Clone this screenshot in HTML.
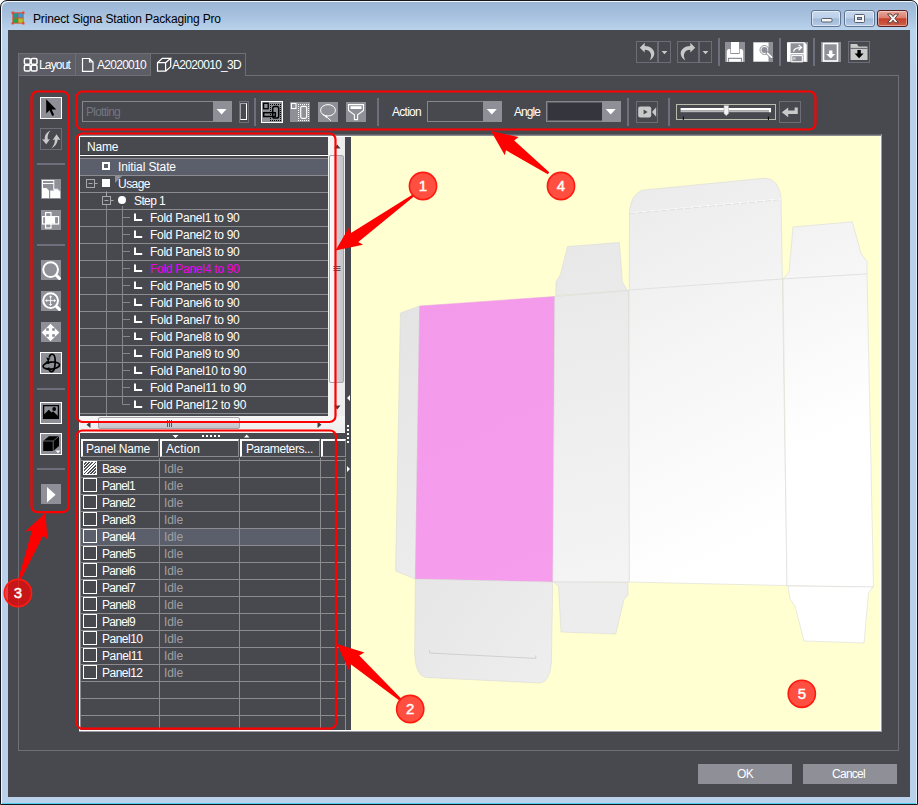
<!DOCTYPE html>
<html>
<head>
<meta charset="utf-8">
<title>Prinect Signa Station Packaging Pro</title>
<style>
html,body{margin:0;padding:0;background:#fff;}
body{width:918px;height:805px;position:relative;overflow:hidden;font-family:"Liberation Sans",sans-serif;font-size:12px;color:#ffffff;}
.a{position:absolute;box-sizing:border-box;}
#win{left:0;top:0;width:918px;height:805px;border-radius:7px 7px 0 0;background:linear-gradient(#9bb5d5 0px,#a6c0de 14px,#bad4ed 30px,#b9d1ea 70px,#b9d1ea 100%);border:1px solid #15171c;box-shadow:inset 1px 1px 0 0 #f0f6fc, inset -1px 0 0 0 #d8f0fa, inset 0 -1px 0 0 #4fd2f2;}
#client{left:8px;top:30px;width:902px;height:767px;background:#48494f;}
.t{position:absolute;white-space:nowrap;line-height:14px;}
.sep{position:absolute;background:#6e6f7c;}
.gb{position:absolute;box-sizing:border-box;background:#8e8f97;}
.wb{border:1px solid #fff;}
.tb{position:absolute;box-sizing:border-box;border:1px solid #6c6d76;}
.hl{position:absolute;height:1px;background:#8b8b90;}
.vl{position:absolute;width:1px;background:#8b8b90;}
.row{position:absolute;left:0;height:17px;}
.hdr{position:absolute;box-sizing:border-box;border:1px solid;border-color:#fdfdfd #85858a #85858a #fdfdfd;box-shadow:inset 1px 1px 0 #d0d0d0;}
.cb{position:absolute;box-sizing:border-box;width:14px;height:14px;border:1px solid #fff;}
.idle{color:#a0a0a0;}
</style>
</head>
<body>
<div id="win" class="a"></div>
<!-- title bar -->
<svg class="a" style="left:10.500px;top:10.500px" width="14" height="14" viewBox="0 0 15 15">
 <rect x="1.500" y="1.500" width="12" height="12" fill="#e2462c"/>
 <rect x="2.500" y="2.500" width="4.600" height="4.600" fill="#1e9a92"/><rect x="8" y="2.500" width="4.600" height="4.600" fill="#2a9fdc"/>
 <rect x="2.500" y="8" width="4.600" height="4.600" fill="#22a548"/><rect x="8" y="8" width="4.600" height="4.600" fill="#a6c92a"/>
 <g fill="#e2462c"><rect x="0.600" y="0.600" width="2.400" height="2.400"/><rect x="12" y="0.600" width="2.400" height="2.400"/><rect x="0.600" y="12" width="2.400" height="2.400"/><rect x="12" y="12" width="2.400" height="2.400"/></g>
</svg>
<div class="t" id="title" style="left:33px;top:12px;color:#000;font-size:12px;letter-spacing:-0.16px;">Prinect Signa Station Packaging Pro</div>
<!-- window buttons -->
<div class="a" style="left:811px;top:10px;width:30px;height:17px;border:1px solid #5f7591;border-radius:3px;background:linear-gradient(#c7d9ee 0,#bccfe8 48%,#9fb9d8 52%,#b5cbe6 100%);box-shadow:inset 0 0 0 1px rgba(255,255,255,.55);"></div>
<div class="a" style="left:844px;top:10px;width:31px;height:17px;border:1px solid #5f7591;border-radius:3px;background:linear-gradient(#c7d9ee 0,#bccfe8 48%,#9fb9d8 52%,#b5cbe6 100%);box-shadow:inset 0 0 0 1px rgba(255,255,255,.55);"></div>
<div class="a" style="left:877px;top:10px;width:31px;height:17px;border:1px solid #5a1d20;border-radius:3px;background:linear-gradient(#e9a99b 0,#d97f70 45%,#c4402c 52%,#d0604a 100%);box-shadow:inset 0 0 0 1px rgba(255,255,255,.4);"></div>
<svg class="a" style="left:811px;top:10px" width="97" height="17" viewBox="0 0 97 17">
 <rect x="10.500" y="8.500" width="10.500" height="3.500" rx="1" fill="#f6f6f6" stroke="#56606e" stroke-width="1"/>
 <rect x="43.500" y="4.500" width="10" height="8" rx="1" fill="#f6f6f6" stroke="#56606e" stroke-width="1"/><rect x="46.500" y="7.500" width="4" height="2" fill="#8fa6c8" stroke="#56606e" stroke-width="1"/>
 <path d="M76.500 4 L80 4 L82 6.600 L84 4 L87.500 4 L83.900 8.400 L87.500 12.800 L84 12.800 L82 10.200 L80 12.800 L76.500 12.800 L80.100 8.400 Z" fill="#f6f6f6" stroke="#5a3a3a" stroke-width="1"/>
</svg>
<div id="client" class="a"></div>

<!-- frame -->
<div class="a" style="left:18px;top:75px;width:881px;height:676px;border:1px solid #6d6e76;"></div>
<!-- tabs -->
<div class="a" style="left:18px;top:53px;width:133px;height:23px;background:#5c5d65;border:1px solid #6d6e76;"></div>
<div class="a" style="left:75px;top:53px;width:1px;height:23px;background:#6d6e76;"></div>
<div class="a" style="left:151px;top:53px;width:95px;height:23px;background:#48494f;border:1px solid #6d6e76;border-left:none;border-bottom:none;"></div>
<svg class="a" style="left:18px;top:53px" width="226" height="23" viewBox="0 0 226 23" fill="none" stroke="#fff" stroke-width="1.2">
 <g stroke-width="1.500"><rect x="6.400" y="5.400" width="5.800" height="5.800" rx="1.300"/><rect x="13.200" y="5.400" width="5.800" height="5.800" rx="1.300"/><rect x="6.400" y="12.200" width="5.800" height="5.800" rx="1.300"/><rect x="13.200" y="12.200" width="5.800" height="5.800" rx="1.300"/></g>
 <path d="M64.500 5.500 H71.500 L75 9 V18.300 H64.500 Z M71.500 5.500 V9 H75"/>
 <path d="M139.500 9.700 H147.600 V18.200 H139.500 Z M139.500 9.700 L144.200 5.300 H152.700 L147.600 9.700 M152.700 5.300 V13.600 L147.600 18.200"/>
</svg>
<div class="t" id="tab1" style="left:39px;top:58px;letter-spacing:-0.84px;">Layout</div>
<div class="t" id="tab2" style="left:97px;top:58px;letter-spacing:-0.72px;">A2020010</div>
<div class="t" id="tab3" style="left:172px;top:58px;letter-spacing:-0.7px;">A2020010_3D</div>
<!-- top right toolbar -->
<div class="tb" style="left:636px;top:41px;width:22px;height:22px;"></div><div class="tb" style="left:658px;top:41px;width:13px;height:22px;"></div>
<div class="tb" style="left:677px;top:41px;width:22px;height:22px;"></div><div class="tb" style="left:699px;top:41px;width:13px;height:22px;"></div>
<div class="sep" style="left:717.500px;top:38px;width:2px;height:28px;"></div>
<div class="gb" style="left:725px;top:42px;width:20px;height:20px;"></div>
<div class="gb" style="left:753px;top:42px;width:20px;height:20px;"></div>
<div class="sep" style="left:779px;top:38px;width:2px;height:28px;"></div>
<div class="gb" style="left:788px;top:42px;width:20px;height:20px;"></div>
<div class="sep" style="left:813px;top:38px;width:2px;height:28px;"></div>
<div class="gb" style="left:821px;top:42px;width:20px;height:20px;"></div>
<div class="tb" style="left:848px;top:41px;width:22px;height:22px;"></div>
<svg class="a" id="tr-icons" style="left:630px;top:36px" width="250" height="32" viewBox="630 36 250 32">

 <g fill="#c9c9c9">
  <!-- undo -->
  <path d="M639.800 47.800 L644.700 42.800 V46 C650 46 654.600 49.500 654.300 54 C654 57 652 59 649.600 60.200 C651.300 57.500 651.500 55 650.500 53 C649.500 51 647.500 49.800 644.700 49.800 V52.600 Z"/>
  <path d="M661.600 51 h5.800 l-2.900 3.200 z"/>
  <!-- redo -->
  <path d="M695.200 47.800 L690.300 42.800 V46 C685 46 680.400 49.500 680.700 54 C681 57 683 59 685.400 60.200 C683.700 57.500 683.500 55 684.500 53 C685.500 51 687.500 49.800 690.300 49.800 V52.600 Z"/>
  <path d="M702.600 51 h5.800 l-2.900 3.200 z"/>
 </g>
 <!-- print -->
 <path d="M726.800 61.800 V51.500 Q726.800 49 729.300 49 H740.700 Q743.200 49 743.200 51.500 V61.800 Z" fill="#fff"/>
 <path d="M730.300 42 H739.700 V54 H730.300 Z" fill="#8e8f97"/>
 <path d="M731 42 H739 V53 H731 Z" fill="#fff"/>
 <path d="M728.500 61.800 V58.400 H741.500 V61.800" fill="none" stroke="#8e8f97" stroke-width="1.200"/>
 <!-- search -->
 <path d="M753.600 42.500 H768.500 V61.500 H753.600 Z" fill="#fff"/>
 <circle cx="764.500" cy="50" r="4.500" fill="none" stroke="#85868e" stroke-width="0.900"/>
 <circle cx="764.500" cy="50" r="3" fill="#8e8f97"/>
 <path d="M767.300 53 L771.800 57.400" stroke="#85868e" stroke-width="3.200" stroke-linecap="round"/>
 <path d="M767.600 53.300 L771.500 57.100" stroke="#fff" stroke-width="1.800" stroke-linecap="round"/>
 <!-- save -->
 <path d="M787 42.200 H804.400 L806.700 44.500 V61.800 H787 Z" fill="#fff"/>
 <rect x="790.600" y="43.300" width="12.900" height="9.700" fill="#8e8f97"/>
 <rect x="790.600" y="54.400" width="12.900" height="7.400" fill="#8e8f97"/>
 <rect x="791.800" y="55.600" width="10.500" height="6.200" fill="none" stroke="#fff" stroke-width="1.100"/>
 <rect x="793" y="57.200" width="2.600" height="2.600" fill="#c4c5ca"/>
 <path d="M793.600 51.600 C793.800 48.600 796.500 47.600 801.200 47.600 M798.600 44.900 L801.600 47.600 L798.600 50.300" fill="none" stroke="#fff" stroke-width="1.200"/>
 <!-- down -->
 <rect x="823.500" y="43.500" width="14" height="17.500" fill="none" stroke="#fff" stroke-width="1.600"/>
 <path d="M829 50.500 H832.400 V54 H835.200 L830.700 58.600 L826.200 54 H829 Z" fill="#fff"/>
 <!-- folder down -->
 <path d="M850.500 44 H857 L858.500 46.500 H867.500 V60 H850.500 Z" fill="#c9c9c9"/>
 <path d="M850.500 48.400 H867.500" stroke="#48494f" stroke-width="0.800"/>
 <path d="M857.400 50 H860.800 V53.500 H863.600 L859.100 58.200 L854.600 53.500 H857.400 Z" fill="#000"/>
</svg>

<!-- toolbar row -->
<div class="tb" style="left:82px;top:101px;width:150px;height:21px;border-color:#85868e;"></div>
<div class="gb" style="left:213px;top:101px;width:19px;height:21px;"></div>
<div class="t" id="plot" style="left:86px;top:105px;color:#74757d;letter-spacing:-0.75px;">Plotting</div>
<div class="tb" style="left:239px;top:101px;width:10px;height:22px;"></div>
<div class="a" style="left:240px;top:103px;width:7px;height:17px;border:1px solid;border-color:#a4a4ac #fff #fff #a4a4ac"></div>
<div class="sep" style="left:254px;top:98px;width:2px;height:28px;"></div>
<div class="gb wb" style="left:261px;top:101px;width:22px;height:22px;"></div>
<div class="gb" style="left:290px;top:102px;width:20px;height:20px;"></div>
<div class="gb" style="left:318px;top:102px;width:20px;height:20px;"></div>
<div class="gb" style="left:346px;top:102px;width:20px;height:20px;"></div>
<div class="sep" style="left:377px;top:98px;width:2px;height:28px;"></div>
<div class="t" id="lact" style="left:392px;top:105px;letter-spacing:-0.73px;">Action</div>
<div class="tb" style="left:427px;top:101px;width:75px;height:21px;border-color:#85868e;"></div>
<div class="gb" style="left:483px;top:101px;width:19px;height:21px;"></div>
<div class="t" id="lang" style="left:514px;top:105px;letter-spacing:-0.94px;">Angle</div>
<div class="tb" style="left:546px;top:101px;width:75px;height:21px;border-color:#85868e;background:#35353d;box-shadow:inset 0 0 0 1px #5a5b63;"></div>
<div class="gb" style="left:602px;top:101px;width:19px;height:21px;"></div>
<div class="sep" style="left:627px;top:98px;width:2px;height:28px;"></div>
<div class="tb" style="left:636px;top:101px;width:22px;height:22px;"></div>
<div class="sep" style="left:668px;top:98px;width:2px;height:28px;"></div>
<div class="a" style="left:676px;top:104px;width:100px;height:16px;border:1px solid #bcbcae;"></div>
<div class="tb" style="left:779px;top:101px;width:22px;height:22px;"></div>
<svg class="a" id="tb2-icons" style="left:76px;top:96px" width="730" height="32" viewBox="76 96 730 32">

 <!-- sel1 -->
 <rect x="263.600" y="103.300" width="4.600" height="5.400" fill="none" stroke="#000" stroke-width="1.300"/>
 <path d="M270 104h1v1h-1z M270 120h1v1h-1z M272 104h1v1h-1z M272 120h1v1h-1z M274 104h1v1h-1z M274 120h1v1h-1z M276 104h1v1h-1z M276 120h1v1h-1z M278 104h1v1h-1z M278 120h1v1h-1z M280 104h1v1h-1z M280 120h1v1h-1z M270 106h1v1h-1z M280 106h1v1h-1z M270 108h1v1h-1z M280 108h1v1h-1z M270 110h1v1h-1z M280 110h1v1h-1z M270 112h1v1h-1z M280 112h1v1h-1z M270 114h1v1h-1z M280 114h1v1h-1z M270 116h1v1h-1z M280 116h1v1h-1z M270 118h1v1h-1z M280 118h1v1h-1z" fill="#000"/>
 <rect x="272.700" y="106.600" width="6" height="11.400" rx="1.800" fill="none" stroke="#000" stroke-width="1.500"/>
 <rect x="263.700" y="112.700" width="11.600" height="3.800" fill="none" stroke="#000" stroke-width="1.500"/>
 <!-- sel2 -->
 <rect x="291.500" y="103.500" width="4.500" height="5" fill="none" stroke="#fff" stroke-width="1.100"/>
 <path d="M298 104h1v1h-1z M298 120h1v1h-1z M300 104h1v1h-1z M300 120h1v1h-1z M302 104h1v1h-1z M302 120h1v1h-1z M304 104h1v1h-1z M304 120h1v1h-1z M306 104h1v1h-1z M306 120h1v1h-1z M308 104h1v1h-1z M308 120h1v1h-1z M298 106h1v1h-1z M308 106h1v1h-1z M298 108h1v1h-1z M308 108h1v1h-1z M298 110h1v1h-1z M308 110h1v1h-1z M298 112h1v1h-1z M308 112h1v1h-1z M298 114h1v1h-1z M308 114h1v1h-1z M298 116h1v1h-1z M308 116h1v1h-1z M298 118h1v1h-1z M308 118h1v1h-1z" fill="#fff"/>
 <rect x="300.700" y="106.300" width="6" height="12" rx="1.500" fill="none" stroke="#fff" stroke-width="1.200"/>
 <!-- lasso -->
 <ellipse cx="328" cy="110.300" rx="7.400" ry="5.700" fill="none" stroke="#fff" stroke-width="1"/>
 <path d="M322.500 114.500 L326.500 116.800 L330.800 120.600" fill="none" stroke="#fff" stroke-width="1"/>
 <circle cx="326.300" cy="116.600" r="1.100" fill="#fff"/>
 <!-- funnel -->
 <path d="M348.500 104.600 H363.500 V110.400 L357.600 114.800 V119.600 H354.400 V114.800 L348.500 110.400 Z" fill="none" stroke="#fff" stroke-width="1.100"/>
 <rect x="350.500" y="106.200" width="11" height="2.800" fill="#fff"/>
 <!-- camera -->
 <rect x="638.200" y="106.400" width="13" height="11.200" rx="2" fill="#c9c9c9"/>
 <path d="M652 112 L656.200 107.200 V116.800 Z" fill="#c9c9c9"/>
 <path d="M643.600 109.400 V114.600 L647.600 112 Z" fill="#48494f"/>
 <!-- slider -->
 <rect x="680.600" y="108" width="90.400" height="2.200" fill="#fff"/>
 <rect x="680.600" y="110.200" width="90.400" height="2" fill="#b9b9b9"/>
 <rect x="769" y="108" width="2" height="4.200" fill="#fff"/>
 <path d="M724 105.500 H728.600 V113.200 L726.300 115.800 L724 113.200 Z" fill="#f4f4f4" stroke="#a8a8a8" stroke-width="0.600"/>
 <path d="M683.300 116.600 V120 M768.400 116.600 V120" stroke="#000" stroke-width="1"/>
 <!-- enter -->
 <path d="M781.800 112.300 L788.200 107.400 V110.600 H794.600 V107.400 H797.800 V114 H788.200 V117.200 Z" fill="#c9c9c9"/>
 <path d="M216.600 109 h10 l-5 5.600 z" fill="#fff"/>
 <path d="M486.800 109 h10 l-5 5.600 z" fill="#fff"/>
 <path d="M605.700 109 h10 l-5 5.600 z" fill="#fff"/>
</svg>

<!-- left toolbar -->
<div class="gb wb" style="left:40px;top:97px;width:22px;height:22px;"></div>
<div class="tb" style="left:40px;top:128px;width:22px;height:22px;"></div>
<div class="sep" style="left:37px;top:163px;width:28px;height:2px;"></div>
<div class="gb" style="left:41px;top:179px;width:20px;height:20px;"></div>
<div class="gb" style="left:41px;top:210px;width:20px;height:20px;"></div>
<div class="sep" style="left:37px;top:244px;width:28px;height:2px;"></div>
<div class="gb" style="left:41px;top:260px;width:20px;height:20px;"></div>
<div class="gb" style="left:41px;top:291px;width:20px;height:20px;"></div>
<div class="gb" style="left:41px;top:322px;width:20px;height:20px;"></div>
<div class="gb wb" style="left:40px;top:352px;width:22px;height:22px;"></div>
<div class="sep" style="left:37px;top:388px;width:28px;height:2px;"></div>
<div class="gb wb" style="left:40px;top:402px;width:22px;height:22px;"></div>
<div class="gb wb" style="left:40px;top:433px;width:22px;height:22px;"></div>
<div class="sep" style="left:37px;top:468px;width:28px;height:2px;"></div>
<div class="gb" style="left:41px;top:484px;width:20px;height:20px;"></div>
<svg class="a" id="lt-icons" style="left:36px;top:94px" width="30" height="414" viewBox="36 94 30 414">

 <!-- cursor -->
 <path d="M46.200 99.200 V113.400 L49.600 110.300 L52.200 116 L54.200 115 L51.700 109.600 H56.300 Z" fill="#000"/>
 <!-- rotate arrows -->
 <g fill="#c9c9c9">
  <path d="M50.600 130.600 C46 132.500 44.400 136 44.800 139.500 L42 139.200 L46.200 144.300 L50 139.200 L47.800 139.500 C47.300 136.500 48 133 50.600 130.600 Z"/>
  <path d="M51.200 148.500 C55.800 146.300 57.600 142.500 57.600 139.600 L60.400 140 L56.600 134.300 L52.600 139.900 L54.800 139.600 C55 142.500 54 146 51.200 148.500 Z"/>
 </g>
 <!-- pages -->
 <g fill="#fff">
  <path d="M42 180 H54.300 V190 H53.300 V184 H43 V188 H42 Z M43 181 V183 H53.300 V181 Z"/>
  <path d="M42 188 H46.500 L49 190.500 V198 H42 Z"/>
  <path d="M50.200 190.500 H54 V188.500 H57.500 L60.200 191 V198 H50.200 Z"/>
 </g>
 <path d="M54.300 188.800 H57.300 L59.600 191" fill="none" stroke="#8e8f97" stroke-width="0.600"/>
 <!-- cross layout -->
 <g fill="none" stroke="#fff" stroke-width="1.200">
  <rect x="45.600" y="212.600" width="5.400" height="15.400"/>
  <rect x="42.600" y="216.600" width="16" height="7.400"/>
  <path d="M54.500 216.600 V224"/>
 </g>
 <rect x="45.600" y="216.600" width="5.400" height="7.400" fill="#fff"/>
 <rect x="51" y="217" width="3.500" height="6.500" fill="#fff"/>
 <!-- magnifier -->
 <circle cx="50.600" cy="269.600" r="7.400" fill="none" stroke="#fff" stroke-width="2"/>
 <path d="M56.600 275.600 L59.400 278.400" stroke="#fff" stroke-width="3" stroke-linecap="round"/>
 <!-- magnifier 2 -->
 <circle cx="50.600" cy="300.600" r="7.400" fill="none" stroke="#fff" stroke-width="2"/>
 <path d="M56.600 306.600 L59.400 309.400" stroke="#fff" stroke-width="3" stroke-linecap="round"/>
 <path d="M46 300.600 H55.200 M50.600 296 V305.200" stroke="#fff" stroke-width="0.900"/>
 <path d="M45.200 300.600 l2 -1.600 v3.200 z M56 300.600 l-2 -1.600 v3.200 z M50.600 295.200 l-1.600 2 h3.200 z M50.600 306 l-1.600 -2 h3.200 z" fill="#fff"/>
 <!-- move -->
 <path d="M50.500 323.700 L59.300 332.500 L50.500 341.300 L41.700 332.500 Z" fill="#fff"/>
 <path d="M46.200 328.200 h2.600 v2.600 h-2.600 z M52.200 328.200 h2.600 v2.600 h-2.600 z M46.200 334.200 h2.600 v2.600 h-2.600 z M52.200 334.200 h2.600 v2.600 h-2.600 z" fill="#85868e"/>
 <!-- 3d rotate -->
 <g fill="none" stroke="#000" stroke-width="1.700">
  <ellipse cx="51.300" cy="365.600" rx="8.300" ry="3.500" transform="rotate(-6 51.300 365.600)"/>
  <path d="M49.200 357.600 C50 353.200 54.600 352.600 55.100 359 C55.600 366 54.200 371.600 51.600 371.600 C49.800 371.600 48.800 369.500 48.500 367.500"/>
 </g>
 <path d="M46.300 357.600 l4 0.800 l-2.400 3 z M45.200 362 l3.800 -1.600 l0.200 3.800 z" fill="#000"/>
 <!-- image -->
 <rect x="43.600" y="405.600" width="14.800" height="12.800" fill="none" stroke="#000" stroke-width="1.300"/>
 <path d="M44 418 V414.500 L48.800 409.800 L51.500 412.500 L53 411.200 L58 416 V418 Z" fill="#000"/>
 <circle cx="54.200" cy="409" r="1.900" fill="#000"/>
 <!-- cube -->
 <path d="M43.200 441 L49 436.200 H59 V446 L53.200 451 H43.200 Z" fill="#000"/>
 <path d="M43.200 441 H53.200 V451 M53.200 441 L59 436.200" fill="none" stroke="#8e8f97" stroke-width="0.700"/>
 <path d="M55.500 450.500 h5 l-2.500 2.800 z" fill="#fff"/>
 <!-- play -->
 <path d="M47 487 V502.500 L55.600 494.700 Z" fill="#fff"/>
</svg>
<!-- tree panel -->
<div class="a" style="left:79px;top:136px;width:802px;height:595px;border:1px solid #fff;border-color:#fff #fff #fff #fff;"></div>
<div class="a" style="left:328px;top:137px;width:17px;height:295px;background:linear-gradient(90deg,#f6f6f6,#efefef 50%,#ececec);"></div>
<div class="a" style="left:80px;top:416px;width:265px;height:16px;background:linear-gradient(#f6f6f6,#ededed);"></div>
<div class="a" style="left:80px;top:155px;width:248px;height:1px;background:#fff;"></div>
<div class="a" style="left:80px;top:154px;width:248px;height:1px;background:#3a3b41;"></div>
<div class="hl" style="left:80px;top:158px;width:248px;"></div>
<div class="t" id="hname" style="left:87px;top:140px;letter-spacing:-0.18px;">Name</div>
<div class="a" style="left:80px;top:159px;width:248px;height:16px;background:#5b5f6c;"></div>
<div class="hl" style="left:80px;top:175px;width:248px;"></div>
<div class="t tr" style="left:118px;top:160px;letter-spacing:-0.11px;">Initial State</div>
<div class="hl" style="left:80px;top:192px;width:248px;"></div>
<div class="t tr" style="left:118px;top:177px;letter-spacing:-0.54px;">Usage</div>
<div class="hl" style="left:80px;top:209px;width:248px;"></div>
<div class="t tr" style="left:134px;top:194px;letter-spacing:-0.62px;">Step 1</div>
<div class="hl" style="left:80px;top:226px;width:248px;"></div>
<div class="t tr" style="left:150px;top:211px;letter-spacing:-0.27px;">Fold Panel1 to 90</div>
<div class="hl" style="left:80px;top:243px;width:248px;"></div>
<div class="t tr" style="left:150px;top:228px;letter-spacing:-0.27px;">Fold Panel2 to 90</div>
<div class="hl" style="left:80px;top:260px;width:248px;"></div>
<div class="t tr" style="left:150px;top:245px;letter-spacing:-0.27px;">Fold Panel3 to 90</div>
<div class="hl" style="left:80px;top:277px;width:248px;"></div>
<div class="t tr" style="left:150px;top:262px;color:#ee00ee;letter-spacing:-0.27px;">Fold Panel4 to 90</div>
<div class="hl" style="left:80px;top:294px;width:248px;"></div>
<div class="t tr" style="left:150px;top:279px;letter-spacing:-0.27px;">Fold Panel5 to 90</div>
<div class="hl" style="left:80px;top:311px;width:248px;"></div>
<div class="t tr" style="left:150px;top:296px;letter-spacing:-0.27px;">Fold Panel6 to 90</div>
<div class="hl" style="left:80px;top:328px;width:248px;"></div>
<div class="t tr" style="left:150px;top:313px;letter-spacing:-0.27px;">Fold Panel7 to 90</div>
<div class="hl" style="left:80px;top:345px;width:248px;"></div>
<div class="t tr" style="left:150px;top:330px;letter-spacing:-0.27px;">Fold Panel8 to 90</div>
<div class="hl" style="left:80px;top:362px;width:248px;"></div>
<div class="t tr" style="left:150px;top:347px;letter-spacing:-0.27px;">Fold Panel9 to 90</div>
<div class="hl" style="left:80px;top:379px;width:248px;"></div>
<div class="t tr" style="left:150px;top:364px;letter-spacing:-0.26px;">Fold Panel10 to 90</div>
<div class="hl" style="left:80px;top:396px;width:248px;"></div>
<div class="t tr" style="left:150px;top:381px;letter-spacing:-0.21px;">Fold Panel11 to 90</div>
<div class="hl" style="left:80px;top:413px;width:248px;"></div>
<div class="t tr" style="left:150px;top:398px;letter-spacing:-0.26px;">Fold Panel12 to 90</div>
<svg class="a" style="left:80px;top:159px" width="248" height="257" viewBox="80 159 248 257"><rect x="102" y="162" width="8" height="8" fill="#fff"/><rect x="104" y="164" width="4" height="4" fill="#5b5f6c"/><rect x="102" y="179" width="8" height="8" fill="#fff"/><path d="M115 176 h7 l-7 7 z" fill="#8e8f97"/><g fill="none" stroke="#a8a8ac" stroke-width="1"><rect x="86.500" y="179.500" width="8" height="8"/><path d="M88.500 183.500 h4 M94.500 183.500 h3"/><rect x="102.500" y="196.500" width="8" height="8"/><path d="M104.500 200.500 h4 M106.500 191.500 v5 M110.500 200.500 h3"/></g><g fill="none" stroke="#85858a" stroke-width="1"><path d="M106.500 205 V416"/><path d="M122.500 206 V404.500"/><path d="M122.500 217.5 H130"/><path d="M122.500 234.5 H130"/><path d="M122.500 251.5 H130"/><path d="M122.500 268.5 H130"/><path d="M122.500 285.5 H130"/><path d="M122.500 302.5 H130"/><path d="M122.500 319.5 H130"/><path d="M122.500 336.5 H130"/><path d="M122.500 353.5 H130"/><path d="M122.500 370.5 H130"/><path d="M122.500 387.5 H130"/><path d="M122.500 404.5 H130"/></g><circle cx="122" cy="200" r="4" fill="#fff"/><path d="M135 213.5 V220 H142.200" fill="none" stroke="#fff" stroke-width="2"/><path d="M135 230.5 V237 H142.200" fill="none" stroke="#fff" stroke-width="2"/><path d="M135 247.5 V254 H142.200" fill="none" stroke="#fff" stroke-width="2"/><path d="M135 264.5 V271 H142.200" fill="none" stroke="#fff" stroke-width="2"/><path d="M135 281.5 V288 H142.200" fill="none" stroke="#fff" stroke-width="2"/><path d="M135 298.5 V305 H142.200" fill="none" stroke="#fff" stroke-width="2"/><path d="M135 315.5 V322 H142.200" fill="none" stroke="#fff" stroke-width="2"/><path d="M135 332.5 V339 H142.200" fill="none" stroke="#fff" stroke-width="2"/><path d="M135 349.5 V356 H142.200" fill="none" stroke="#fff" stroke-width="2"/><path d="M135 366.5 V373 H142.200" fill="none" stroke="#fff" stroke-width="2"/><path d="M135 383.5 V390 H142.200" fill="none" stroke="#fff" stroke-width="2"/><path d="M135 400.5 V407 H142.200" fill="none" stroke="#fff" stroke-width="2"/></svg>

<div class="a" style="left:79px;top:731px;width:803px;height:1px;background:#9c9ca2;"></div>
<div class="a" style="left:881px;top:134px;width:1px;height:598px;background:#9c9ca2;"></div>
<!-- scrollbars detail -->
<div class="a" style="left:79px;top:134px;width:802px;height:1px;background:#62636a;"></div>
<div class="a" style="left:79px;top:135px;width:802px;height:1px;background:#8a8a8e;"></div>
<div class="a" style="left:329px;top:155px;width:15px;height:228px;border:1px solid #a4a4a8;border-radius:2px;background:linear-gradient(90deg,#fbfbfb 0,#f0f0f0 45%,#cfcfd4 55%,#c4c4ca 100%);"></div>
<div class="a" style="left:98px;top:417px;width:142px;height:12px;border:1px solid #a4a4a8;border-radius:2px;background:linear-gradient(#fbfbfb 0,#f0f0f0 45%,#cfcfd4 55%,#c4c4ca 100%);"></div>
<svg class="a" style="left:80px;top:137px" width="266" height="296" viewBox="80 137 266 296">
 <path d="M334 148.500 h6.500 l-3.250 -4 z M334 405.500 h6.500 l-3.250 4 z M90.500 421.500 v6.500 l-4 -3.250 z M317.500 421.500 v6.500 l4 -3.250 z" fill="#3c3c44"/>
 <path d="M333.500 266.500 h7 M333.500 268.500 h7 M333.500 270.500 h7 M167.500 420 v7 M169.500 420 v7 M171.500 420 v7" stroke="#55565e" stroke-width="1"/>
</svg>
<!-- splitter band + table -->
<div class="a" style="left:80px;top:432px;width:265px;height:1px;background:#f4f4f4;"></div>
<svg class="a" style="left:80px;top:433px" width="265" height="6" viewBox="80 433 265 6" fill="#fff"><path d="M172.500 435 h6 l-3 3 z M244 437.500 h5.500 l-2.750 -3 z"/><path d="M202 435h2v2h-2z M206 435h2v2h-2z M210 435h2v2h-2z M214 435h2v2h-2z M218 435h2v2h-2z"/></svg>
<div class="a" style="left:81px;top:439px;width:78px;height:18px;border-top:2px solid #fbfbfb;border-left:2px solid #fbfbfb;border-bottom:1px solid #8a8a8e;border-right:1px solid #8a8a8e;"></div>
<div class="t th" style="left:86px;top:442px;letter-spacing:-0.2px;">Panel Name</div>
<div class="a" style="left:160px;top:439px;width:79px;height:18px;border-top:2px solid #fbfbfb;border-left:2px solid #fbfbfb;border-bottom:1px solid #8a8a8e;border-right:1px solid #8a8a8e;"></div>
<div class="t th" style="left:166px;top:442px;letter-spacing:0.11px;">Action</div>
<div class="a" style="left:240px;top:439px;width:80px;height:18px;border-top:2px solid #fbfbfb;border-left:2px solid #fbfbfb;border-bottom:1px solid #8a8a8e;border-right:1px solid #8a8a8e;"></div>
<div class="t th" style="left:246px;top:442px;letter-spacing:-0.39px;">Parameters...</div>
<div class="a" style="left:321px;top:439px;width:25px;height:18px;border-top:2px solid #fbfbfb;border-left:2px solid #fbfbfb;border-bottom:1px solid #8a8a8e;border-right:1px solid #8a8a8e;"></div>
<div class="hl" style="left:80px;top:460px;width:266px;"></div>
<div class="a" style="left:80px;top:529px;width:240px;height:16px;background:#5b5f6c;"></div>
<div class="hl" style="left:80px;top:477px;width:266px;"></div>
<div class="cb" style="left:83px;top:461px;background:repeating-linear-gradient(135deg,#fff 0,#fff 0.9px,#48494f 1.1px,#48494f 2.1px,#fff 2.3px);"></div>
<div class="t pn" style="left:102px;top:462px;letter-spacing:-0.96px;">Base</div>
<div class="t idle" style="left:164px;top:462px;letter-spacing:-0.09px;">Idle</div>
<div class="hl" style="left:80px;top:494px;width:266px;"></div>
<div class="cb" style="left:83px;top:478px;"></div>
<div class="t pn" style="left:102px;top:479px;letter-spacing:-0.73px;">Panel1</div>
<div class="t idle" style="left:164px;top:479px;letter-spacing:-0.09px;">Idle</div>
<div class="hl" style="left:80px;top:511px;width:266px;"></div>
<div class="cb" style="left:83px;top:495px;"></div>
<div class="t pn" style="left:102px;top:496px;letter-spacing:-0.73px;">Panel2</div>
<div class="t idle" style="left:164px;top:496px;letter-spacing:-0.09px;">Idle</div>
<div class="hl" style="left:80px;top:528px;width:266px;"></div>
<div class="cb" style="left:83px;top:512px;"></div>
<div class="t pn" style="left:102px;top:513px;letter-spacing:-0.73px;">Panel3</div>
<div class="t idle" style="left:164px;top:513px;letter-spacing:-0.09px;">Idle</div>
<div class="hl" style="left:80px;top:545px;width:266px;"></div>
<div class="cb" style="left:83px;top:529px;"></div>
<div class="t pn" style="left:102px;top:530px;letter-spacing:-0.73px;">Panel4</div>
<div class="t idle" style="left:164px;top:530px;letter-spacing:-0.09px;">Idle</div>
<div class="hl" style="left:80px;top:562px;width:266px;"></div>
<div class="cb" style="left:83px;top:546px;"></div>
<div class="t pn" style="left:102px;top:547px;letter-spacing:-0.73px;">Panel5</div>
<div class="t idle" style="left:164px;top:547px;letter-spacing:-0.09px;">Idle</div>
<div class="hl" style="left:80px;top:579px;width:266px;"></div>
<div class="cb" style="left:83px;top:563px;"></div>
<div class="t pn" style="left:102px;top:564px;letter-spacing:-0.73px;">Panel6</div>
<div class="t idle" style="left:164px;top:564px;letter-spacing:-0.09px;">Idle</div>
<div class="hl" style="left:80px;top:596px;width:266px;"></div>
<div class="cb" style="left:83px;top:580px;"></div>
<div class="t pn" style="left:102px;top:581px;letter-spacing:-0.73px;">Panel7</div>
<div class="t idle" style="left:164px;top:581px;letter-spacing:-0.09px;">Idle</div>
<div class="hl" style="left:80px;top:613px;width:266px;"></div>
<div class="cb" style="left:83px;top:597px;"></div>
<div class="t pn" style="left:102px;top:598px;letter-spacing:-0.73px;">Panel8</div>
<div class="t idle" style="left:164px;top:598px;letter-spacing:-0.09px;">Idle</div>
<div class="hl" style="left:80px;top:630px;width:266px;"></div>
<div class="cb" style="left:83px;top:614px;"></div>
<div class="t pn" style="left:102px;top:615px;letter-spacing:-0.73px;">Panel9</div>
<div class="t idle" style="left:164px;top:615px;letter-spacing:-0.09px;">Idle</div>
<div class="hl" style="left:80px;top:647px;width:266px;"></div>
<div class="cb" style="left:83px;top:631px;"></div>
<div class="t pn" style="left:102px;top:632px;letter-spacing:-0.51px;">Panel10</div>
<div class="t idle" style="left:164px;top:632px;letter-spacing:-0.09px;">Idle</div>
<div class="hl" style="left:80px;top:664px;width:266px;"></div>
<div class="cb" style="left:83px;top:648px;"></div>
<div class="t pn" style="left:102px;top:649px;letter-spacing:-0.38px;">Panel11</div>
<div class="t idle" style="left:164px;top:649px;letter-spacing:-0.09px;">Idle</div>
<div class="hl" style="left:80px;top:681px;width:266px;"></div>
<div class="cb" style="left:83px;top:665px;"></div>
<div class="t pn" style="left:102px;top:666px;letter-spacing:-0.51px;">Panel12</div>
<div class="t idle" style="left:164px;top:666px;letter-spacing:-0.09px;">Idle</div>
<div class="hl" style="left:80px;top:698px;width:266px;"></div>
<div class="hl" style="left:80px;top:715px;width:266px;"></div>
<div class="vl" style="left:80px;top:458px;height:272px;"></div>
<div class="vl" style="left:159px;top:458px;height:272px;"></div>
<div class="vl" style="left:239px;top:458px;height:272px;"></div>
<div class="vl" style="left:320px;top:458px;height:272px;"></div>
<div class="vl" style="left:345px;top:458px;height:272px;"></div>
<div class="a" style="left:346px;top:137px;width:5px;height:593px;background:#48494f;"></div>
<svg class="a" style="left:346px;top:137px" width="5" height="593" viewBox="346 137 5 593" fill="#fff"><path d="M350 395 v6 l-3 -3 z M347 466 v6 l3 -3 z"/><path d="M347 425h2v2h-2z M347 429h2v2h-2z M347 433h2v2h-2z M347 437h2v2h-2z M347 441h2v2h-2z"/></svg>
<div class="a" id="view" style="left:351px;top:136px;width:529px;height:594px;background:#ffffd2;"></div>
<div class="gb" style="left:698px;top:764px;width:94px;height:20px;"></div><div class="t" id="ok" style="left:737px;top:767px;letter-spacing:-0.67px;">OK</div>
<div class="gb" style="left:803px;top:764px;width:94px;height:20px;"></div><div class="t" id="cancel" style="left:832px;top:767px;letter-spacing:-0.73px;">Cancel</div>

<svg class="a" id="model" style="left:351px;top:136px" width="529" height="594" viewBox="351 136 529 594">
<defs>
 <linearGradient id="gA" gradientUnits="userSpaceOnUse" x1="395" y1="300" x2="420" y2="580"><stop offset="0" stop-color="#e4e4e4"/><stop offset="1" stop-color="#ececec"/></linearGradient>
 <linearGradient id="gP" gradientUnits="userSpaceOnUse" x1="420" y1="300" x2="555" y2="580"><stop offset="0" stop-color="#f39aea"/><stop offset="1" stop-color="#f79dee"/></linearGradient>
 <linearGradient id="g2" gradientUnits="userSpaceOnUse" x1="555" y1="240" x2="640" y2="600"><stop offset="0" stop-color="#e8e8e8"/><stop offset="1" stop-color="#f5f5f5"/></linearGradient>
 <linearGradient id="g3" gradientUnits="userSpaceOnUse" x1="629" y1="180" x2="800" y2="520"><stop offset="0" stop-color="#ebebeb"/><stop offset=".5" stop-color="#f6f6f6"/><stop offset="1" stop-color="#ffffff"/></linearGradient>
 <linearGradient id="g4" gradientUnits="userSpaceOnUse" x1="783" y1="220" x2="870" y2="420"><stop offset="0" stop-color="#f2f2f2"/><stop offset="1" stop-color="#ffffff"/></linearGradient>
 <linearGradient id="gB" gradientUnits="userSpaceOnUse" x1="415" y1="580" x2="552" y2="680"><stop offset="0" stop-color="#e6e6e6"/><stop offset="1" stop-color="#eeeeee"/></linearGradient>
</defs>
<g stroke="#d4d4d4" stroke-width="0.5" stroke-linejoin="round">
 <path d="M400.400 313 L419.700 306 L415.400 579 L395.600 571 Z" fill="url(#gA)"/>
 <path d="M419.700 306 L554.700 296.500 L552.800 582 L415.400 579 Z" fill="url(#gP)" stroke="#e9a0e2"/>
 <path d="M415.400 579 L414.600 653 Q415 674 425 677.400 L540 683 Q550 682 551.400 662 L552.800 582 Z" fill="url(#gB)"/>
 <path d="M555.700 295.500 L556 281.800 L560.600 274 L567.500 246.500 L619.400 242.500 L622.400 281.800 L627.300 290 L628.200 290.600 Z" fill="url(#g2)"/>
 <path d="M554.700 296.500 L628.700 290.600 L629.400 582 L552.800 582 Z" fill="url(#g2)"/>
 <path d="M554 582 L558.500 586.700 L561 632 L615.700 634 L624 599.500 L628 595 L628 582.500 Z" fill="#ededed"/>
 <path d="M629.200 290.600 L629.500 212 Q630.500 195 642 190.200 L764 178.200 Q779 178 781 198 L782.400 279 Z" fill="url(#g3)"/>
 <path d="M629 290 L782.400 279 L787 585.600 L629.400 582 Z" fill="url(#g3)"/>
 <path d="M783 279 L789 272 L793 227 L852.400 221.800 L861 253.500 L867 261.500 L867 274 Z" fill="url(#g4)"/>
 <path d="M783 279 L867 274 L873.500 587 L787 585.600 Z" fill="url(#g4)"/>
 <path d="M788 586 L790 599 L795 606 L804 641 L864 643 L868.500 593 L873 587 Z" fill="#ffffff"/>
</g>
<path d="M629.500 213 L781 199" stroke="#fff" stroke-width="0.8" fill="none"/>
<path d="M629.500 213.600 L781 199.600" stroke="#d2d2d2" stroke-width="0.6" stroke-dasharray="6 2" fill="none"/>
<path d="M429.600 650 V653 L535.800 658.400 V655.400" stroke="#c4c4c4" stroke-width="0.7" fill="none"/>
</svg>
<!--APP-->
<svg class="a" id="anno" style="left:0;top:0" width="918" height="805" viewBox="0 0 918 805">
<g fill="none" stroke="#ff0000" stroke-width="2.2">
 <rect x="31.500" y="91.500" width="37" height="420.700" rx="6" ry="6"/>
 <rect x="76.500" y="91.500" width="739" height="38" rx="6" ry="6"/>
 <rect x="76.500" y="133.500" width="259" height="288.500" rx="6" ry="6"/>
 <rect x="76.500" y="430.500" width="259.500" height="298.200" rx="6" ry="6"/>
</g>
<g fill="#ff0000">
 <path d="M335.5 250.6 L349.2 227.0 L351.0 233.0 L413.1 194.2 L414.5 196.1 L358.3 242.0 L363.0 244.7 Z"/>
 <path d="M491.0 131.0 L518.6 137.0 L514.2 140.6 L549.2 172.2 L547.8 174.2 L506.0 150.3 L504.8 155.3 Z"/>
 <path d="M337.0 644.0 L364.4 652.5 L359.2 655.5 L401.6 699.1 L400.0 700.9 L350.7 664.2 L348.8 670.0 Z"/>
 <path d="M45.5 512.7 L47.4 539.5 L43.2 535.5 L20.6 579.8 L18.3 579.0 L32.0 530.5 L25.3 531.6 Z"/>
</g>
<g fill="rgba(255,0,0,0.69)" stroke="#ff1a10" stroke-width="1.6">
 <circle cx="423" cy="186" r="13.600"/>
 <circle cx="561" cy="186" r="13.600"/>
 <circle cx="410.200" cy="709" r="13.600"/>
 <circle cx="17.900" cy="593" r="13.600"/>
 <circle cx="801.800" cy="693.800" r="13.600"/>
</g>
<g fill="#fff" stroke="#fff" stroke-width="0.450" font-family="Liberation Sans, sans-serif" font-size="15" text-anchor="middle">
 <text x="423" y="191">1</text>
 <text x="561" y="191">4</text>
 <text x="410.200" y="714">2</text>
 <text x="17.900" y="598">3</text>
 <text x="801.800" y="698.800">5</text>
</g>
</svg>

</body>
</html>
